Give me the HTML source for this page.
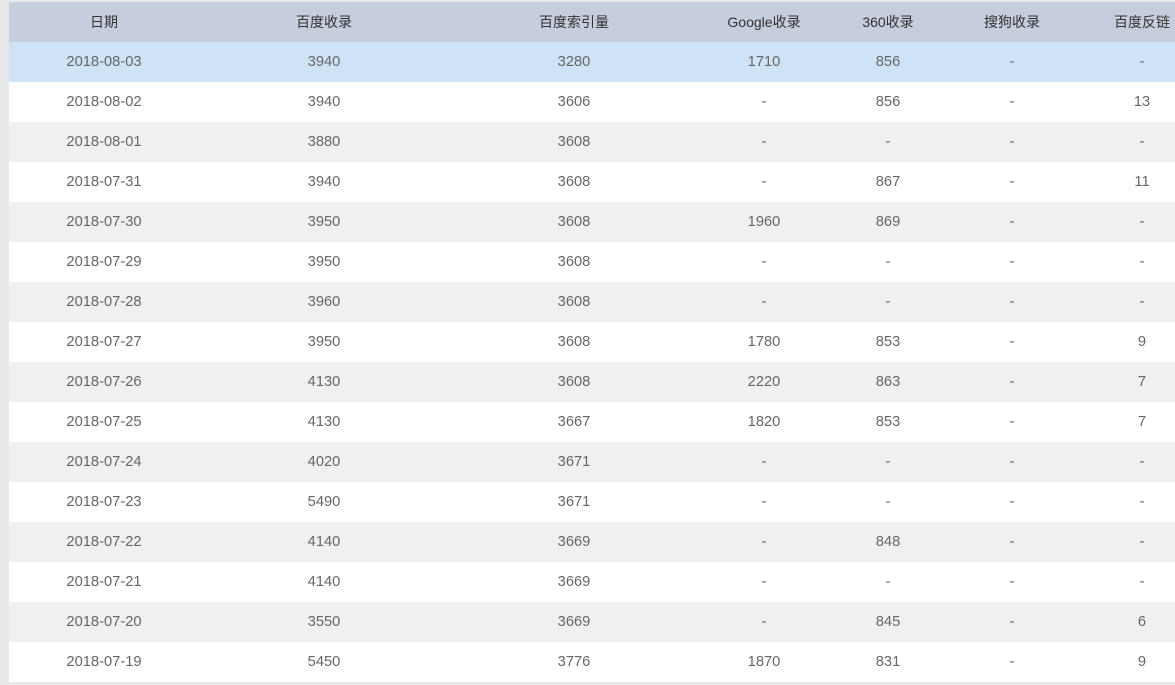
<!DOCTYPE html>
<html><head><meta charset="utf-8"><style>
body{margin:0;width:1175px;height:685px;background:#e9e9e9;overflow:hidden;font-family:"Liberation Sans","Noto Sans CJK SC",sans-serif;font-size:14.7px}
.t{position:absolute;left:9px;top:2px;width:1166px}
.r{position:relative;height:40px;line-height:40px;color:#666}
.r span{position:absolute;width:200px;margin-left:-100px;text-align:center;top:0}
.h{background:#c6cddc;color:#333;font-size:14px}
.s{background:#cfe3f7}
.w{background:#fff}
.g{background:#f0f0f0}
</style></head><body><div class="t" id="t"></div>
<script>
var cx=[95,315,565,755,879,1003,1133];
var rows=[["日期","百度收录","百度索引量","Google收录","360收录","搜狗收录","百度反链"],
["2018-08-03","3940","3280","1710","856","-","-"],
["2018-08-02","3940","3606","-","856","-","13"],
["2018-08-01","3880","3608","-","-","-","-"],
["2018-07-31","3940","3608","-","867","-","11"],
["2018-07-30","3950","3608","1960","869","-","-"],
["2018-07-29","3950","3608","-","-","-","-"],
["2018-07-28","3960","3608","-","-","-","-"],
["2018-07-27","3950","3608","1780","853","-","9"],
["2018-07-26","4130","3608","2220","863","-","7"],
["2018-07-25","4130","3667","1820","853","-","7"],
["2018-07-24","4020","3671","-","-","-","-"],
["2018-07-23","5490","3671","-","-","-","-"],
["2018-07-22","4140","3669","-","848","-","-"],
["2018-07-21","4140","3669","-","-","-","-"],
["2018-07-20","3550","3669","-","845","-","6"],
["2018-07-19","5450","3776","1870","831","-","9"]];
var h="";
rows.forEach(function(r,i){
var c=i==0?"h":i==1?"s":(i%2==0?"w":"g");
h+='<div class="r '+c+'">';
r.forEach(function(v,j){h+='<span style="left:'+cx[j]+'px">'+v+'</span>';});
h+='</div>';});
document.getElementById("t").innerHTML=h;
</script></body></html>
